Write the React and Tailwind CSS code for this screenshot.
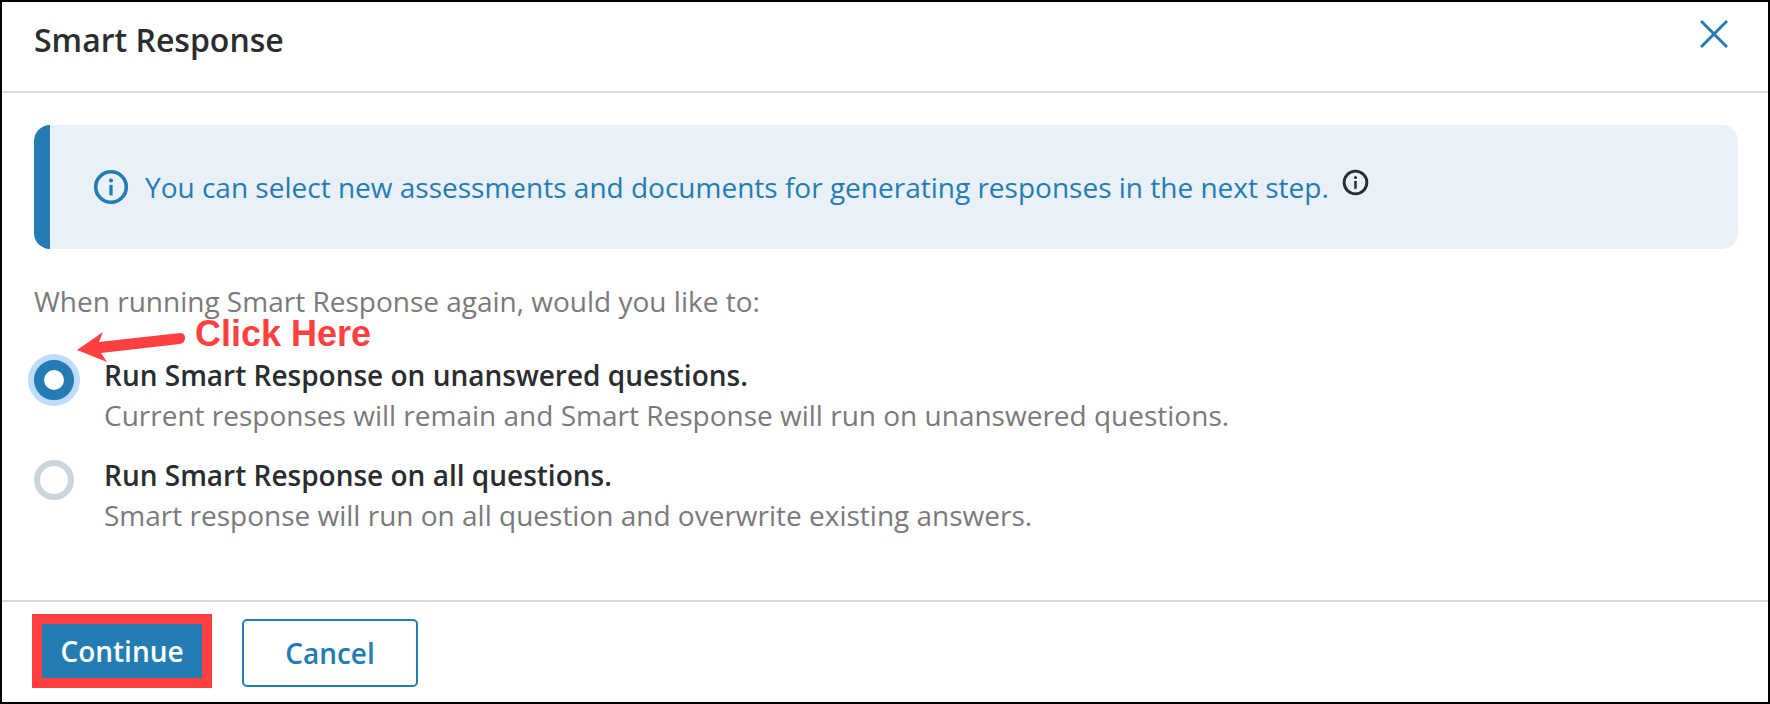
import React from 'react';

const InfoIcon = ({ className, stroke = 2 }) => (
  <svg viewBox="0 0 24 24" fill="none" className={className}>
    <circle cx="12" cy="12" r={11.4 - stroke / 2} stroke="currentColor" strokeWidth={stroke} />
    <rect x="10.9" y="10.6" width="2.2" height="7" fill="currentColor" />
    <circle cx="12" cy="7.6" r="1.35" fill="currentColor" />
  </svg>
);

const Option = ({ selected, title, description }) => (
  <div className="flex items-start">
    <div className="w-[70px] shrink-0 pt-[5px]">
      {selected ? (
        <div className="w-10 h-10 rounded-full border-[10px] border-[#237db2] bg-white shadow-[0_0_0_6px_#bfdbfe]" />
      ) : (
        <div className="w-10 h-10 rounded-full border-[6px] border-[#cbd5dc] bg-white" />
      )}
    </div>
    <div>
      <div className="text-[28px] leading-[40px] font-semibold text-[#2a2d30]">{title}</div>
      <div className="text-[28px] leading-[40px] text-[#7a7a7a]">{description}</div>
    </div>
  </div>
);

export default function App() {
  return (
    <div className="relative w-[1770px] h-[704px] flex flex-col bg-white border-2 border-black font-['Open_Sans',sans-serif]">
      {/* Header */}
      <div className="h-[91px] shrink-0 flex items-start justify-between pl-[32px] pr-[40px] border-b-2 border-[#d5dade]">
        <h1 className="mt-[16px] text-[32px] leading-[44px] font-semibold text-[#2a2d30]">Smart Response</h1>
        <button className="mt-[18px] text-[#237db2]" aria-label="Close">
          <svg viewBox="0 0 28 28" className="w-[28px] h-[28px]" stroke="currentColor" strokeWidth="3" fill="none">
            <path d="M1 1 L27 27 M27 1 L1 27" />
          </svg>
        </button>
      </div>

      {/* Body */}
      <div className="flex-1 pl-[32px] pr-[30px] pt-[32px]">
        <div className="h-[124px] flex items-center rounded-[16px] border-l-[16px] border-[#237db2] bg-[#e9f0f7] pl-[43px]">
          <InfoIcon stroke={2.4} className="w-[36px] h-[36px] text-[#237db2]" />
          <span className="ml-[16px] text-[28px] leading-[36px] text-[#237db2]">
            You can select new assessments and documents for generating responses in the next step.
          </span>
          <InfoIcon stroke={2.6} className="ml-[13px] mb-[9px] w-[27px] h-[27px] text-[#2a2d30]" />
        </div>
        <p className="mt-[36px] text-[28px] leading-[32px] text-[#7a7a7a]">
          When running Smart Response again, would you like to:
        </p>
        <div className="mt-[38px] flex flex-col gap-[20px]">
          <Option
            selected
            title="Run Smart Response on unanswered questions."
            description="Current responses will remain and Smart Response will run on unanswered questions."
          />
          <Option
            title="Run Smart Response on all questions."
            description="Smart response will run on all question and overwrite existing answers."
          />
        </div>
      </div>

      {/* Footer */}
      <div className="h-[102px] shrink-0 flex items-start gap-[30px] pl-[30px] pt-[12px] border-t-2 border-[#d5dade]">
        <button className="w-[180px] h-[74px] border-[10px] border-[#ff4040] bg-[#237db2] text-white text-[28px] font-semibold">
          Continue
        </button>
        <button className="mt-[5px] w-[176px] h-[68px] rounded-[5px] border-2 border-[#237db2] text-[#237db2] text-[28px] font-semibold">
          Cancel
        </button>
      </div>

      {/* Annotation */}
      <span className="absolute left-[193px] top-[317px] text-[36px] leading-[30px] font-bold text-[#ff4040] font-['Liberation_Sans',sans-serif]">
        Click Here
      </span>
      <svg className="absolute left-[68px] top-[322px] w-[125px] h-[48px]" viewBox="0 0 125 48" fill="none">
        <path d="M7 26 L33 8 L29 18 L110 9 Q115 9 115 14 Q115 19 110 20 L31 29 L37 38 Z" fill="#ff4040" />
      </svg>
    </div>
  );
}
